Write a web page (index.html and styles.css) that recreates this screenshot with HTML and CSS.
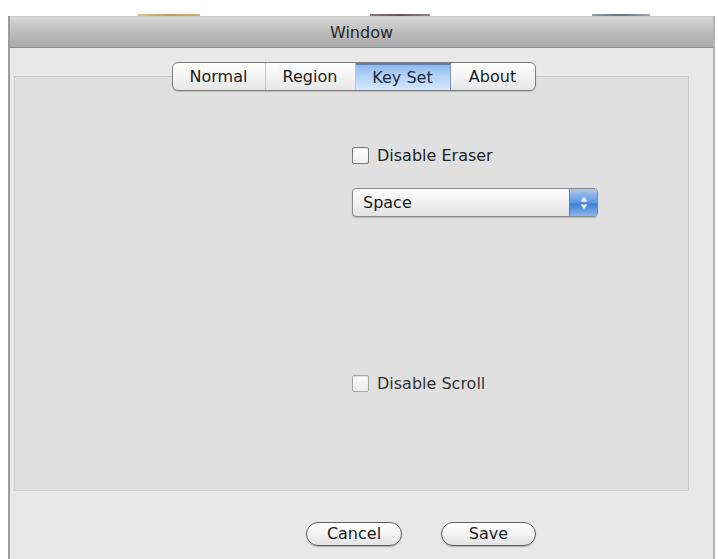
FILE: index.html
```html
<!DOCTYPE html>
<html>
<head>
<meta charset="utf-8">
<link rel="stylesheet" href="styles.css">
</head>
<body>
<div class="backdrop">
  <span class="peek peek-orange"></span>
  <span class="peek peek-dark"></span>
  <span class="peek peek-blue"></span>
</div>
<div class="window">
  <div class="titlebar">Window</div>
  <div class="content">
    <div class="tabbox">
      <div class="tabs">
        <div class="tab t-normal">Normal</div>
        <div class="tab t-region">Region</div>
        <div class="tab t-keyset selected">Key Set</div>
        <div class="tab t-about">About</div>
      </div>
      <div class="panel">
        <label class="check row-eraser"><span class="box"></span>Disable Eraser</label>
        <div class="select">
          <span class="select-text">Space</span>
          <span class="select-cap">
            <svg width="10" height="16" viewBox="0 0 10 16"><path d="M5 2 L8.5 6.5 L1.5 6.5 Z" fill="#fff"/><path d="M5 14 L8.5 9.5 L1.5 9.5 Z" fill="#fff"/></svg>
          </span>
        </div>
        <label class="check row-scroll disabled"><span class="box"></span>Disable Scroll</label>
      </div>
    </div>
    <div class="buttons">
      <button class="btn btn-cancel">Cancel</button>
      <button class="btn btn-save">Save</button>
    </div>
  </div>
</div>
</body>
</html>
```

FILE: styles.css
```css
html, body {
  margin: 0;
  padding: 0;
  background: #ffffff;
  height: 100%;
  overflow: hidden;
}
body {
  font-family: "DejaVu Sans", "Liberation Sans", sans-serif;
  font-size: 16px;
  color: #1c1c1c;
}
.backdrop {
  height: 16px;
  display: flex;
  align-items: flex-end;
}
.peek {
  display: block;
  height: 2px;
}
.peek-orange {
  width: 62px;
  margin-left: 138px;
  background: linear-gradient(90deg, #e0c08a, #c29a5a, #d2ae74);
}
.peek-dark {
  width: 60px;
  margin-left: 170px;
  background: linear-gradient(90deg, #8a7c78, #5e5358, #978a86);
}
.peek-blue {
  width: 58px;
  margin-left: 162px;
  background: linear-gradient(90deg, #8f98a8, #6d7688, #9aa3b2);
}
.window {
  margin-left: 8px;
  width: 707px;
  height: 543px;
  box-sizing: border-box;
  border-left: 2px solid #9c9c9c;
  border-right: 2px solid #b4b4b4;
  background: #e8e8e8;
  display: flex;
  flex-direction: column;
}
.titlebar {
  height: 32px;
  box-sizing: border-box;
  background: linear-gradient(#d6d6d6, #c2c2c2 40%, #a9a9a9);
  border-top: 1px solid #cfcfcf;
  border-bottom: 1px solid #8e8e8e;
  text-align: center;
  line-height: 32px;
  font-size: 16px;
  color: #262626;
}
.content {
  flex: 1;
  padding: 14px 24px 0 4px;
  display: flex;
  flex-direction: column;
}
.tabbox {
  display: flex;
  flex-direction: column;
}
.tabs {
  align-self: center;
  position: relative;
  z-index: 1;
  display: flex;
  height: 29px;
  box-sizing: border-box;
  border: 1px solid #7e7e7e;
  border-radius: 6px;
  background: linear-gradient(#ffffff, #f4f4f4 50%, #e6e6e6);
  box-shadow: 0 1px 1px rgba(0,0,0,0.15);
  overflow: hidden;
  margin-left: 4px;
}
.tab {
  display: flex;
  align-items: center;
  justify-content: center;
  font-size: 16px;
  color: #1a1a1a;
  border-right: 1px solid #c4c4c4;
  box-sizing: border-box;
}
.tab:last-child { border-right: none; }
.t-normal { width: 93px; }
.t-region { width: 90px; }
.t-keyset { width: 95px; }
.t-about { width: 84px; }
.tab.selected {
  background: linear-gradient(#8fb8ea, #b4d3f6 45%, #d3e6fb);
  border-top: 2px solid #5c7fb8;
  border-right: 1px solid #7b94bb;
  color: #1b2a40;
}
.panel {
  margin-top: -15px;
  height: 415px;
  box-sizing: border-box;
  border: 1px solid #c9c9c9;
  border-bottom-color: #d2d2d2;
  background: #e0e0e0;
  padding: 69px 0 0 337px;
  display: flex;
  flex-direction: column;
  align-items: flex-start;
}
.check {
  display: flex;
  align-items: center;
  height: 18px;
  font-size: 16px;
  color: #222;
}
.check .box {
  width: 15px;
  height: 15px;
  border: 1px solid #7a7a7a;
  border-radius: 2px;
  background: linear-gradient(#ffffff, #eeeeee);
  margin-right: 8px;
  box-shadow: inset 0 1px 1px rgba(0,0,0,0.1);
}
.check.disabled .box {
  border-color: #a8a8a8;
  background: linear-gradient(#f8f8f8, #ececec);
}
.check.disabled { color: #333; }
.select {
  margin-top: 24px;
  width: 246px;
  height: 29px;
  box-sizing: border-box;
  border: 1px solid #8a8a8a;
  border-radius: 4px;
  background: linear-gradient(#ffffff, #f1f1f1 50%, #e2e2e2);
  box-shadow: 0 1px 1px rgba(0,0,0,0.2);
  display: flex;
  align-items: center;
  overflow: hidden;
}
.select-text {
  flex: 1;
  padding-left: 10px;
  font-size: 16px;
  color: #1a1a1a;
}
.select-cap {
  width: 27px;
  height: 100%;
  display: flex;
  align-items: center;
  justify-content: center;
  background: linear-gradient(#a9c9f0, #5d97e0 50%, #3f7fd4 55%, #8ab6ee);
  border-left: 1px solid #5a7fb2;
}
.row-scroll {
  margin-top: 157px;
}
.buttons {
  display: flex;
  gap: 39px;
  padding-left: 292px;
  margin-top: 31px;
}
.btn {
  height: 24px;
  box-sizing: border-box;
  border: 1px solid #5e5e5e;
  border-radius: 12px;
  background: linear-gradient(#ffffff, #f3f3f3 50%, #e2e2e2);
  box-shadow: 0 1px 1px rgba(0,0,0,0.25);
  font-family: "DejaVu Sans", "Liberation Sans", sans-serif;
  font-size: 16px;
  color: #1c1c1c;
  padding: 0;
  line-height: 22px;
}
.btn-cancel { width: 96px; }
.btn-save { width: 95px; }
```
